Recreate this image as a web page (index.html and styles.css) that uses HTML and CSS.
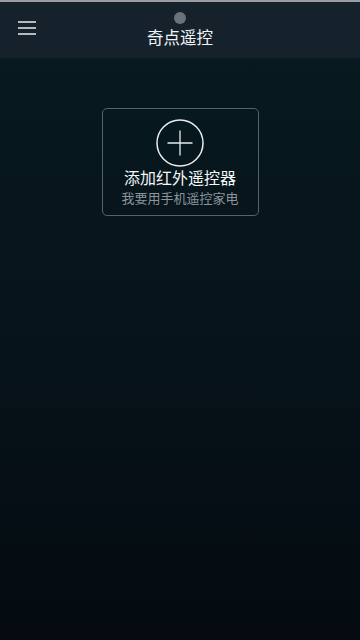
FILE: index.html
```html
<!DOCTYPE html>
<html lang="zh-CN">
  <head>
    <meta charset="UTF-8" />
    <meta name="viewport" content="width=device-width, initial-scale=1.0" />
    <title>奇点遥控</title>
    <link rel="stylesheet" href="styles.css">
  </head>

  <body>
    <div class="status-strip"></div>
    <header class="top-bar">
      <button class="menu-btn" aria-label="菜单">
        <svg width="18" height="14" viewBox="0 0 18 14">
          <path d="M0 1H18M0 7H18M0 13H18" stroke="#e6edf2" stroke-width="1.4" />
        </svg>
      </button>
      <span class="camera-dot"></span>
      <h1>奇点遥控</h1>
    </header>

    <main class="content">
      <div class="add-card">
        <svg class="plus-icon" width="48" height="48" viewBox="0 0 48 48">
          <circle cx="24" cy="24" r="23" fill="none" stroke="#e8ecef" stroke-width="1.5" />
          <path d="M11.5 24H36.5M24 11.5V36.5" stroke="#e8ecef" stroke-width="1.3" />
        </svg>
        <h2>添加红外遥控器</h2>
        <p>我要用手机遥控家电</p>
      </div>
    </main>
  </body>
</html>
```

FILE: styles.css
```css
body {
  margin: 0;
  padding: 0;
  height: 640px;
  overflow: hidden;
  font-family: "Noto Sans CJK SC", "Noto Sans", sans-serif;
  background: linear-gradient(to bottom, #081a21 0%, #061219 60%, #050b10 100%);
  color: #ffffff;
}

.status-strip {
  height: 2px;
  background-color: #9a9ea3;
}

.top-bar {
  position: relative;
  height: 56px;
  background-color: #15222b;
  display: flex;
  align-items: center;
  justify-content: center;
}

.menu-btn {
  position: absolute;
  left: 18px;
  top: 19px;
  padding: 0;
  border: none;
  background: none;
  line-height: 0;
}

.camera-dot {
  position: absolute;
  left: 174px;
  top: 10px;
  width: 12px;
  height: 12px;
  border-radius: 50%;
  background-color: #6b737a;
}

.top-bar h1 {
  margin: 14px 0 0;
  font-size: 16.5px;
  font-weight: 400;
  color: #f2f5f7;
}

.content {
  display: flex;
  justify-content: center;
  padding-top: 50px;
}

.add-card {
  width: 155px;
  height: 106px;
  border: 1px solid #56626b;
  border-radius: 5px;
  display: flex;
  flex-direction: column;
  align-items: center;
  box-sizing: content-box;
}

.plus-icon {
  margin-top: 10px;
}

.add-card h2 {
  margin: 0;
  font-size: 16px;
  font-weight: 400;
  line-height: 21px;
  color: #f4f6f8;
}

.add-card p {
  margin: 0;
  font-size: 13px;
  line-height: 20px;
  color: #8b949a;
}
```
